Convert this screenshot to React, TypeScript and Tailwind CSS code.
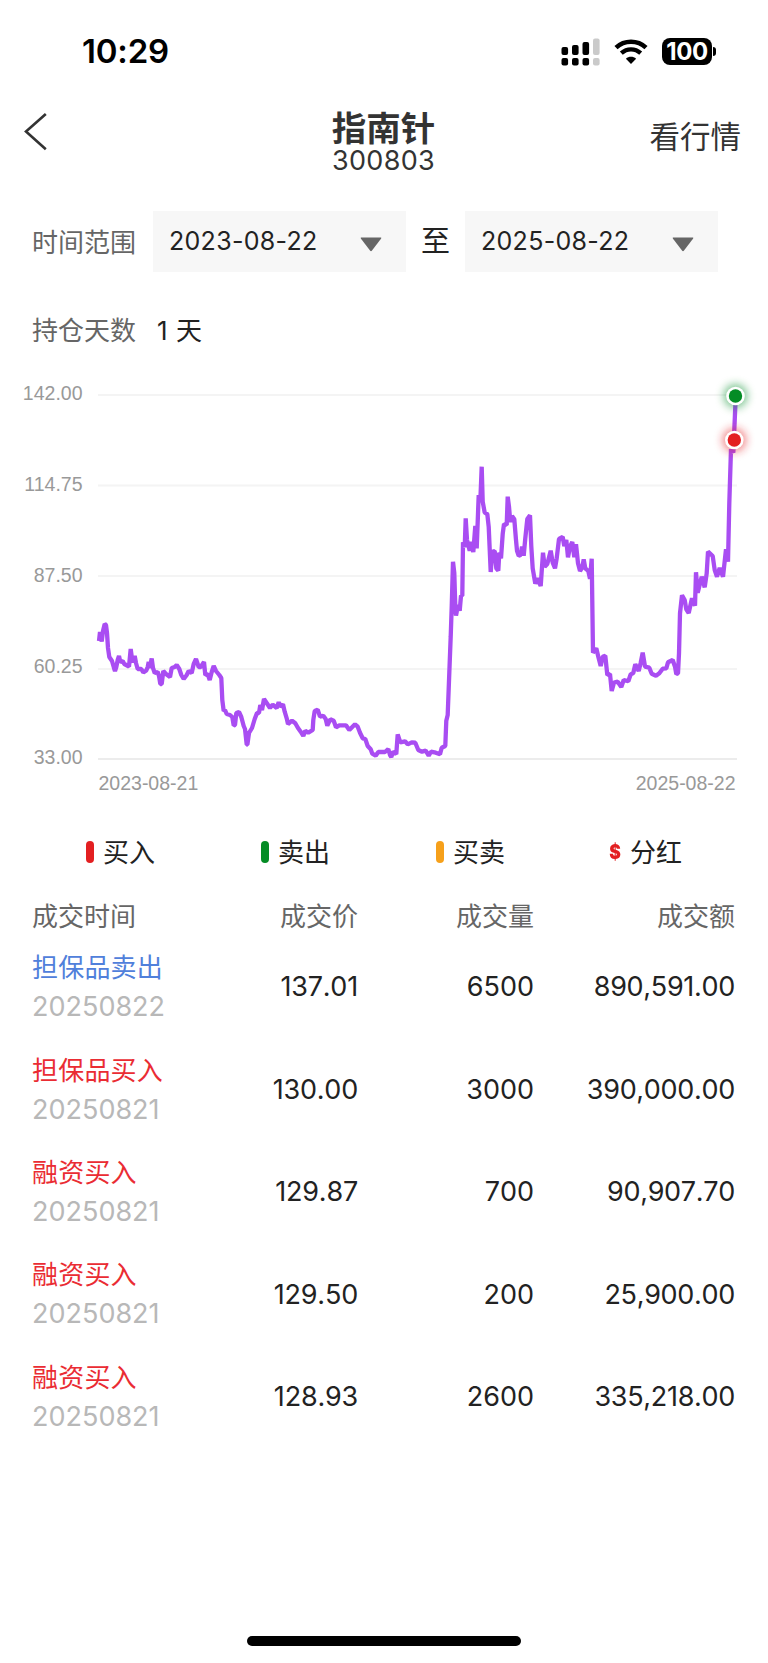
import React from 'react';
import clsx from 'clsx';

const legends = [
  { label: '买入', color: 'bg-[#e31f21]' },
  { label: '卖出', color: 'bg-[#048c25]' },
  { label: '买卖', color: 'bg-[#f6a01a]' },
  { label: '分红', color: '' },
];

const trades = [
  { type: '担保品卖出', date: '20250822', price: '137.01', volume: '6500', amount: '890,591.00', sell: true },
  { type: '担保品买入', date: '20250821', price: '130.00', volume: '3000', amount: '390,000.00', sell: false },
  { type: '融资买入', date: '20250821', price: '129.87', volume: '700', amount: '90,907.70', sell: false },
  { type: '融资买入', date: '20250821', price: '129.50', volume: '200', amount: '25,900.00', sell: false },
  { type: '融资买入', date: '20250821', price: '128.93', volume: '2600', amount: '335,218.00', sell: false },
];

const gridLines = [
  { y: 395, labelY: 400, label: '142.00' },
  { y: 485.5, labelY: 491, label: '114.75' },
  { y: 576, labelY: 582, label: '87.50' },
  { y: 669, labelY: 673, label: '60.25' },
  { y: 759, labelY: 764, label: '33.00' },
];

const pricePoints = [
  // 2023
  '99,641 100,632 101.7,641.5 103,631 104.7,624 106,625 107,633 108,648 109.3,657 112,661 114,668 115,671 116.3,667 117.7,660 119,656 120.3,662 122.7,661 124.3,664 129,666.5 130.7,649 132.3,661 133,662 134.7,656 136,663 137.7,669 141.3,669 143.3,672.5 146.3,670.5 147.7,667 148.7,662 149.7,668 151.7,658.5 153,668 154.7,673 157.7,672 159,676 160.3,684 161.7,684 163.3,671 166,674 170,677 171.7,668 174.7,667 176.7,665 179.3,669 181.3,675 183.7,679 186.7,675 188.7,671 191.7,673 193.7,664 196,659 198.7,667 200.7,667 204,662 205.3,675 207.7,674 209.7,680 211.7,672 213.7,666 216,671 219.3,675 221.3,678',
  '222.3,700 223.7,711 225,710 226.7,714 230,715 232.3,717 233.7,725.5 235,725 236.3,713 239,712 241.3,717 243.7,726 245,729 246.7,744.5 247.4,744.5 249,733 252,728 254.7,719 257,713 259,713 260.3,705 262,710 264,699 266.7,703 270,708 272.7,704.7 276.7,708 278.7,702.3 280.3,706.7 283,704.3 284.7,711.7 286.7,718.3 288,724 292,720.7 295.3,723.3 298,728 300.7,731.7 303.3,736 305.3,730.7 308.3,732.7 312.7,730',
  // 2024
  '313.3,720 314.7,711 317.7,709.7 320,716.7 323.3,715.7 325.7,719 327.3,725.7 330.3,719.3 333.7,720.7 336,727.3 339.3,725.3 346,725.3 349.3,730 355,724.3 357.7,726.7 360,732.7 362.7,738.3 365.3,739 367.7,746 370.7,749.3 372.3,753.7 375.7,755.7 378.3,752 385,752 388.3,749 390,755 391.3,757 393,751.7 396.3,754 397.7,734.3 400.3,742.3 405,741.3 407.7,744.3 411.7,742.3 415.3,742.7 418.3,750 422,751.7 425.7,750.7 428.7,755.7 431,751.7 435.7,752.7 440,754.3 441.7,747.7 445.3,746',
  '446.3,720.7 447.7,715 449.3,673 450.7,636.7 451.7,606.7 453,561.7 454.3,573 455.3,606.7 456,615.7 458,605 459.7,610.7 461,595.7 462.3,595.7 463,542.3 464.7,547.3 465.7,518.3 467,540 469.7,550.7 471,541.7 473.3,552 475.3,526 476.7,548.3 478.7,495 480.3,501.7 481.7,466.7 482.7,501.7 484.7,512.7 487.3,514 488.7,526.7 490.7,572 492.3,551.7 494.7,551 496.3,568.3 498.3,570.7 499.3,552.7 501,558.3 502.7,534 504,524 506.7,525 507.7,496.7 509,506.7 510.3,522 512,516 514.3,519.3 516,540 517,550.7 518.7,555.7 520.7,555 522,546.7 523.7,555.7 525.3,538.3 527.3,519 530,515.3 531.3,546.7 532.7,568.3 535.3,583.7 537.3,578.3 540.7,586 543,552.7 544.7,566.7 547.3,564 550.7,550.7 552.7,562.7 555,568.3 556.7,558.3 559,539 562.7,537 564.3,546 566.3,540 568,557.3 570,546.7 572.3,542 574.3,557.3 576,544.3 578,563.3 580,571 582.3,567.3 583.7,559.3 585.3,568.3 588.3,571 590,578.7 591.7,558.7',
  // 2025
  '593,652.7 596.3,648.3 598.3,656.7 600.7,666 602.7,656.7 605.3,655.7 607.3,675 610,674 611.7,691 614,682.7 617.7,681.7 621.3,687 623.7,680 628.3,681.3 630.7,674.3 633.3,673 635.3,664.3 638.7,671 640.7,662.7 642.7,652.7 645,666.7 649.3,667.7 651.7,673.7 656,675.7 659.3,673.3 662.7,668.7 666.3,668.3 668,662.3 672.7,660 675,666.7 676.3,674 678,673.3 679,653.3 680,613.3 682,595.3 684.7,600 686.3,609.3 688.7,613 692,598.3 695,605.7 696,572.3 697.7,592.7 701.7,576.7 704.7,587.3 706.7,573.3 708,551.7 712.7,556 714.7,570 717,576.7 719.7,568 723,576.7 726,549.3 728,561.7 729.3,503.3 731,449 733.3,452.7 734.3,430 735.3,406.7 735.7,396',
].join(' ');

const StatusBar = () => (
  <div className="flex h-[103px] items-center justify-between pl-[82px] pr-[52px]">
    <span className="text-[33px] font-semibold leading-none tracking-[-0.2px] text-black">10:29</span>
    <div className="flex items-center">
      <svg width="39" height="28" viewBox="0 0 39 28">
        {[0, 10.5, 21].map((x, i) => (
          <g key={x} fill="#000">
            <rect x={x + 0.5} y={[9, 7, 4][i]} width="6.6" height={[8, 10, 13][i]} rx="2" />
            <rect x={x + 0.5} y="20" width="6.6" height="7.6" rx="2" />
          </g>
        ))}
        <rect x="32" y="0.5" width="6.6" height="16.5" rx="2" fill="#cacaca" />
        <rect x="32" y="20" width="6.6" height="7.6" rx="2" fill="#cacaca" />
      </svg>
      <svg className="ml-[14px]" width="34" height="26" viewBox="0 0 34 26">
        <path d="M2 8.6C10.500 .8 23.500 .8 32 8.600" fill="none" stroke="#000" strokeWidth="4.600" />
        <path d="M7.300 14.200C13 9 21 9 26.700 14.200" fill="none" stroke="#000" strokeWidth="4.300" />
        <path d="M17 25 L11.900 19.800 C14.700 17.200 19.300 17.200 22.100 19.800 Z" fill="#000" />
      </svg>
      <div className="ml-[14px] flex h-[27px] w-[50px] items-center justify-center rounded-[8px] bg-black text-[24px] font-bold leading-none tracking-[-0.4px] text-white">
        100
      </div>
      <div className="ml-[1px] h-[9px] w-[3px] rounded-r-full bg-black" />
    </div>
  </div>
);

const Header = () => (
  <div className="grid h-[108px] grid-cols-3 text-[#333]">
    <svg className="ml-[23px] mt-[9px]" width="25" height="40" viewBox="0 0 25 40">
      <path d="M22.800 2 L3 19.500 L22.800 37.200" fill="none" stroke="#333" strokeWidth="2.600" />
    </svg>
    <div className="flex flex-col items-center pr-[1px] pt-[8px]">
      <h1 className="text-[34.500px] font-bold leading-[36px]">指南针</h1>
      <div className="text-[27px] leading-[28px] tracking-[0.3px]">300803</div>
    </div>
    <div className="pr-[27px] pt-[14px] text-right text-[30.500px] leading-[40px]">看行情</div>
  </div>
);

const DateSelect = ({ value }: { value: string }) => (
  <div className="flex h-[61px] w-[253px] shrink-0 items-center justify-between bg-[#f7f7f7] pl-4 pr-[24px] text-[25px] text-[#222]">
    <span className="pt-[1px] tracking-[0.3px]">{value}</span>
    <svg className="mt-[6px]" width="22" height="15" viewBox="0 0 22 15">
      <path d="M1.500 .5h19c.8 0 1 .5.5 1.200L11.800 13.800c-.5.600-1.100.6-1.600 0L1 1.700C.5 1 .7.5 1.500.5z" fill="#666" />
    </svg>
  </div>
);

const PriceChart = () => (
  <svg className="block" width="768" height="440" viewBox="0 370 768 440">
    <defs>
      <filter id="glow" x="-100%" y="-100%" width="300%" height="300%">
        <feGaussianBlur stdDeviation="4" />
      </filter>
    </defs>
    {gridLines.map((line) => (
      <g key={line.label}>
        <line x1="98" x2="737" y1={line.y} y2={line.y} stroke={line.y === 759 ? '#ececec' : '#f4f4f4'} strokeWidth="2" />
        <text x="82.500" y={line.labelY} textAnchor="end" className="fill-[#999] font-['Liberation_Sans',sans-serif] text-[19.500px]">
          {line.label}
        </text>
      </g>
    ))}
    <polyline points={pricePoints} fill="none" stroke="#a94df2" strokeWidth="4.300" strokeLinejoin="bevel" />
    <circle cx="734.3" cy="440" r="12" fill="#e31f21" opacity="0.5" filter="url(#glow)" />
    <circle cx="734.3" cy="440" r="9.300" fill="#fff" />
    <circle cx="734.3" cy="440" r="6.700" fill="#e31f21" />
    <circle cx="735.500" cy="396" r="12" fill="#048c25" opacity="0.5" filter="url(#glow)" />
    <circle cx="735.500" cy="396" r="9.300" fill="#fff" />
    <circle cx="735.500" cy="396" r="6.700" fill="#048c25" />
    <text x="98.500" y="790" className="fill-[#999] font-['Liberation_Sans',sans-serif] text-[19.500px]">2023-08-21</text>
    <text x="735.500" y="790" textAnchor="end" className="fill-[#999] font-['Liberation_Sans',sans-serif] text-[19.500px]">2025-08-22</text>
  </svg>
);

const Legend = () => (
  <div className="flex h-[84px] items-center pl-[86px] pt-[2px] text-[26px] text-[#222]">
    {legends.map((item) => (
      <div key={item.label} className="flex w-[175px] shrink-0 items-center">
        {item.color ? (
          <span className={clsx('mb-[2px] mr-[9px] h-[22px] w-2 rounded-full', item.color)} />
        ) : (
          <span className="-ml-[2px] mb-[2px] mr-[9px] flex w-[12px] scale-x-[0.85] justify-center text-[20.500px] font-black leading-none text-[#e31f21]">
            $
          </span>
        )}
        <span className="leading-[30px]">{item.label}</span>
      </div>
    ))}
  </div>
);

const TradeTable = () => (
  <div className="px-8">
    <div className="grid h-[44px] grid-cols-[148px_178px_176px_201px] items-center pt-[1px] text-[26px] text-[#666]">
      <span>成交时间</span>
      <span className="text-right">成交价</span>
      <span className="text-right">成交量</span>
      <span className="text-right">成交额</span>
    </div>
    {trades.map((trade) => (
      <div
        key={trade.price}
        className="grid h-[102.400px] grid-cols-[148px_178px_176px_201px] items-center text-[27px] text-[#222] [font-kerning:none]"
      >
        <div className="whitespace-nowrap pb-[4px]">
          <div
            className={clsx(
              'text-[26px] leading-[39px] tracking-[0.200px]',
              trade.sell ? 'text-[#5080db]' : 'text-[#ea2c33]'
            )}
          >
            {trade.type}
          </div>
          <div className="leading-[39px] text-[#b8b8b8]">{trade.date}</div>
        </div>
        <span className="pb-[3px] text-right tracking-[-0.200px]">{trade.price}</span>
        <span className="pb-[3px] text-right">{trade.volume}</span>
        <span className="pb-[3px] text-right tracking-[-0.300px]">{trade.amount}</span>
      </div>
    ))}
  </div>
);

const App = () => {
  return (
    <div className="flex h-[1663px] w-[768px] flex-col overflow-hidden bg-white font-[Inter,'Noto_Sans_CJK_SC',sans-serif]">
      <StatusBar />
      <Header />
      <div className="flex h-[61px] items-center pl-8">
        <span className="w-[121px] pt-[2px] text-[26px] text-[#666]">时间范围</span>
        <DateSelect value="2023-08-22" />
        <span className="w-[59px] pt-[1px] text-center text-[29px] text-[#222]">至</span>
        <DateSelect value="2025-08-22" />
      </div>
      <div className="flex h-[98px] items-center pl-8 pt-[18px] text-[26px]">
        <span className="w-[125px] text-[#666]">持仓天数</span>
        <span className="tracking-[0.500px] text-[#222]">1 天</span>
      </div>
      <PriceChart />
      <Legend />
      <TradeTable />
      <div className="mb-[17px] mt-auto h-[10px] w-[274px] self-center rounded-full bg-black" />
    </div>
  );
};

export default App;
